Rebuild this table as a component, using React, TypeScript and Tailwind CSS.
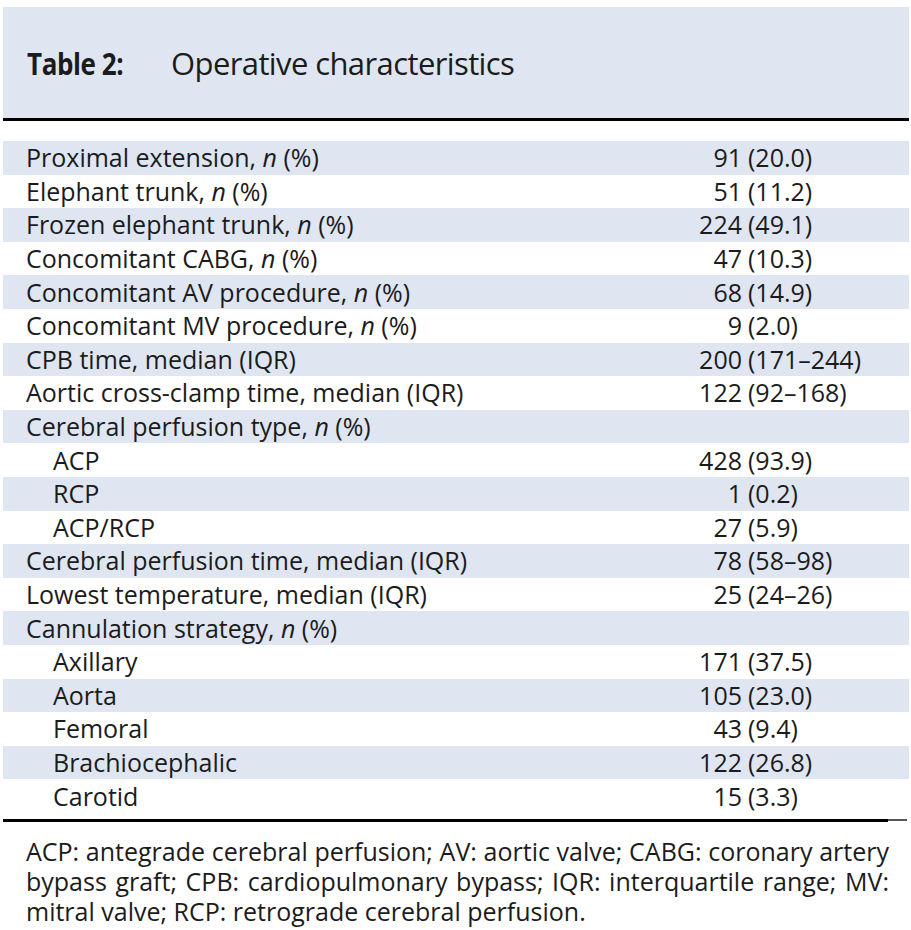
type Row = {
  label: React.ReactNode
  num?: string
  pct?: string
  indent?: boolean
}

const n = <i>n</i>

const rows: Row[] = [
  { label: <>Proximal extension, {n} (%)</>, num: '91', pct: '(20.0)' },
  { label: <>Elephant trunk, {n} (%)</>, num: '51', pct: '(11.2)' },
  { label: <>Frozen elephant trunk, {n} (%)</>, num: '224', pct: '(49.1)' },
  { label: <>Concomitant CABG, {n} (%)</>, num: '47', pct: '(10.3)' },
  { label: <>Concomitant AV procedure, {n} (%)</>, num: '68', pct: '(14.9)' },
  { label: <>Concomitant MV procedure, {n} (%)</>, num: '9', pct: '(2.0)' },
  { label: 'CPB time, median (IQR)', num: '200', pct: '(171–244)' },
  { label: 'Aortic cross-clamp time, median (IQR)', num: '122', pct: '(92–168)' },
  { label: <>Cerebral perfusion type, {n} (%)</> },
  { label: 'ACP', num: '428', pct: '(93.9)', indent: true },
  { label: 'RCP', num: '1', pct: '(0.2)', indent: true },
  { label: 'ACP/RCP', num: '27', pct: '(5.9)', indent: true },
  { label: 'Cerebral perfusion time, median (IQR)', num: '78', pct: '(58–98)' },
  { label: 'Lowest temperature, median (IQR)', num: '25', pct: '(24–26)' },
  { label: <>Cannulation strategy, {n} (%)</> },
  { label: 'Axillary', num: '171', pct: '(37.5)', indent: true },
  { label: 'Aorta', num: '105', pct: '(23.0)', indent: true },
  { label: 'Femoral', num: '43', pct: '(9.4)', indent: true },
  { label: 'Brachiocephalic', num: '122', pct: '(26.8)', indent: true },
  { label: 'Carotid', num: '15', pct: '(3.3)', indent: true },
]

export default function App() {
  return (
    <div className="w-[911px] h-[930px] bg-white pt-[7px] pl-[3px] pr-[2px] text-[#1b1b1b] font-['Open_Sans',sans-serif] overflow-hidden">
      {/* Title band */}
      <div className="h-[111px] bg-[#dfe6f2] flex items-center pl-[24px] pt-[2px]">
        <span className="inline-block w-[144px] text-[31px] font-bold tracking-[-0.5px] origin-left scale-x-[0.84]">
          Table 2:
        </span>
        <span className="text-[31px] tracking-[-0.6px]">Operative characteristics</span>
      </div>
      <div className="h-[3px] bg-black" />

      {/* Body */}
      <div className="mt-[20px]">
        {rows.map((r, i) => (
          <div
            key={i}
            className={`grid grid-cols-[597px_142px_1fr] items-center h-[33.6px] text-[25px] leading-none ${
              i % 2 === 0 ? 'bg-[#dfe6f2]' : 'bg-white'
            }`}
          >
            <div className={r.indent ? 'pl-[50px]' : 'pl-[23px]'}>{r.label}</div>
            <div className="text-right">{r.num}</div>
            <div className="pl-[6px]">{r.pct}</div>
          </div>
        ))}
      </div>

      {/* Bottom rule */}
      <div className="flex items-center mt-[6px] pr-[2px]">
        <div className="h-[3px] w-[885px] bg-black" />
        <div className="h-[2px] flex-1 bg-[#555]" />
      </div>

      {/* Footnote */}
      <p className="mt-[14px] ml-[23px] w-[863px] text-[25px] leading-[30px] text-justify">
        ACP: antegrade cerebral perfusion; AV: aortic valve; CABG: coronary artery bypass graft; CPB:
        cardiopulmonary bypass; IQR: interquartile range; MV: mitral valve; RCP: retrograde cerebral
        perfusion.
      </p>
    </div>
  )
}
